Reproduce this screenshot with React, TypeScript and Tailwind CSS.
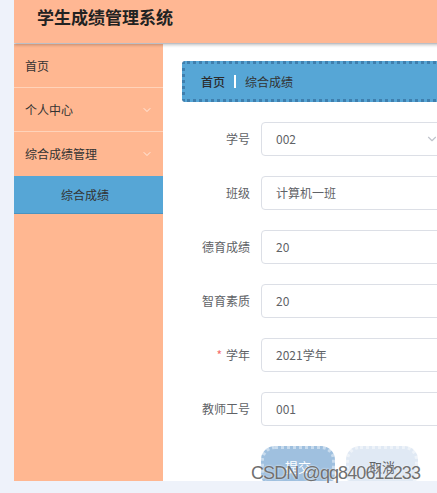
import { ChevronDown } from 'lucide-react'

const font = { fontFamily: '"Noto Sans CJK SC", "Liberation Sans", sans-serif' }

const fields = [
  { label: '学号', value: '002', select: true },
  { label: '班级', value: '计算机一班' },
  { label: '德育成绩', value: '20' },
  { label: '智育素质', value: '20' },
  { label: '学年', value: '2021学年', required: true },
  { label: '教师工号', value: '001' },
]

export default function App() {
  return (
    <div className="relative w-[437px] h-[493px] overflow-hidden bg-[#eef2fa]" style={font}>
      <div className="ml-[14px] w-[800px] h-[481px] overflow-hidden flex flex-col">
        <div className="relative z-10 h-[43px] shrink-0 bg-[#ffb793] shadow-[0_2px_3px_rgba(0,0,0,0.25)] pl-[23px] pt-[5px]">
          <div className="text-[17px] font-bold text-[#222] leading-[24px]">学生成绩管理系统</div>
        </div>
        <div className="flex flex-1 pt-[1px]">
          <div className="w-[149px] shrink-0 bg-[#ffb791] text-[12px] text-[#333]">
            <div className="h-[44px] flex items-center pl-[11px] border-b border-[#ffd3ba]">首页</div>
            <div className="h-[44px] flex items-center justify-between pl-[11px] pr-[10px] border-b border-[#ffd3ba]">
              <span>个人中心</span>
              <ChevronDown size={12} className="text-white/70" />
            </div>
            <div className="h-[44px] flex items-center justify-between pl-[11px] pr-[10px]">
              <span>综合成绩管理</span>
              <ChevronDown size={12} className="text-white/70" />
            </div>
            <div className="h-[38px] flex items-center pl-[47px] bg-[#56a6d6] border-b border-[#4a93c0]">综合成绩</div>
          </div>
          <div className="flex-1 bg-white pl-[19px] pt-[17px]">
            <div className="h-[41px] bg-[#56a6d6] border-[3px] border-dotted border-[#3f7fae] rounded-[3px] flex items-center pl-[16px] text-[12px] text-[#2b2b2b]">
              <span className="font-medium">首页</span>
              <span className="mx-[9px] w-[2px] h-[13px] bg-white" />
              <span className="text-[#333]">综合成绩</span>
            </div>
            <div className="mt-[20px] flex flex-col gap-[20px]">
              {fields.map(f => (
                <div key={f.label} className="flex items-center">
                  <div className="w-[79px] pr-[11px] text-right text-[12px] text-[#606266]">
                    {f.required && <span className="text-[#f56c6c] mr-[4px]">*</span>}
                    {f.label}
                  </div>
                  <div className="w-[187px] h-[34px] border border-[#dcdfe6] rounded-[4px] flex items-center justify-between pl-[14px] pr-[8px] text-[12px] text-[#606266]">
                    <span>{f.value}</span>
                    {f.select && <ChevronDown size={14} className="text-[#c0c4cc]" />}
                  </div>
                </div>
              ))}
            </div>
            <div className="mt-[20px] flex gap-[11px] pl-[79px]">
              <div className="w-[74px] h-[42px] rounded-[14px] bg-[#9fc0df] border-[3px] border-dotted border-[#c9dcee] flex items-center justify-center text-[13px] text-white">提交</div>
              <div className="w-[72px] h-[42px] rounded-[14px] bg-[#e0e9f4] border-[3px] border-dotted border-[#eef3f9] flex items-center justify-center text-[13px] text-[#606266]">取消</div>
            </div>
          </div>
        </div>
      </div>
      <div
        className="absolute left-[251px] top-[464px] text-[18px] text-[#707070] leading-none tracking-[-0.9px] [text-shadow:0_0_2px_#ffffff]"
        style={{ fontFamily: '"Liberation Sans", sans-serif' }}
      >
        CSDN @qq840612233
      </div>
    </div>
  )
}
